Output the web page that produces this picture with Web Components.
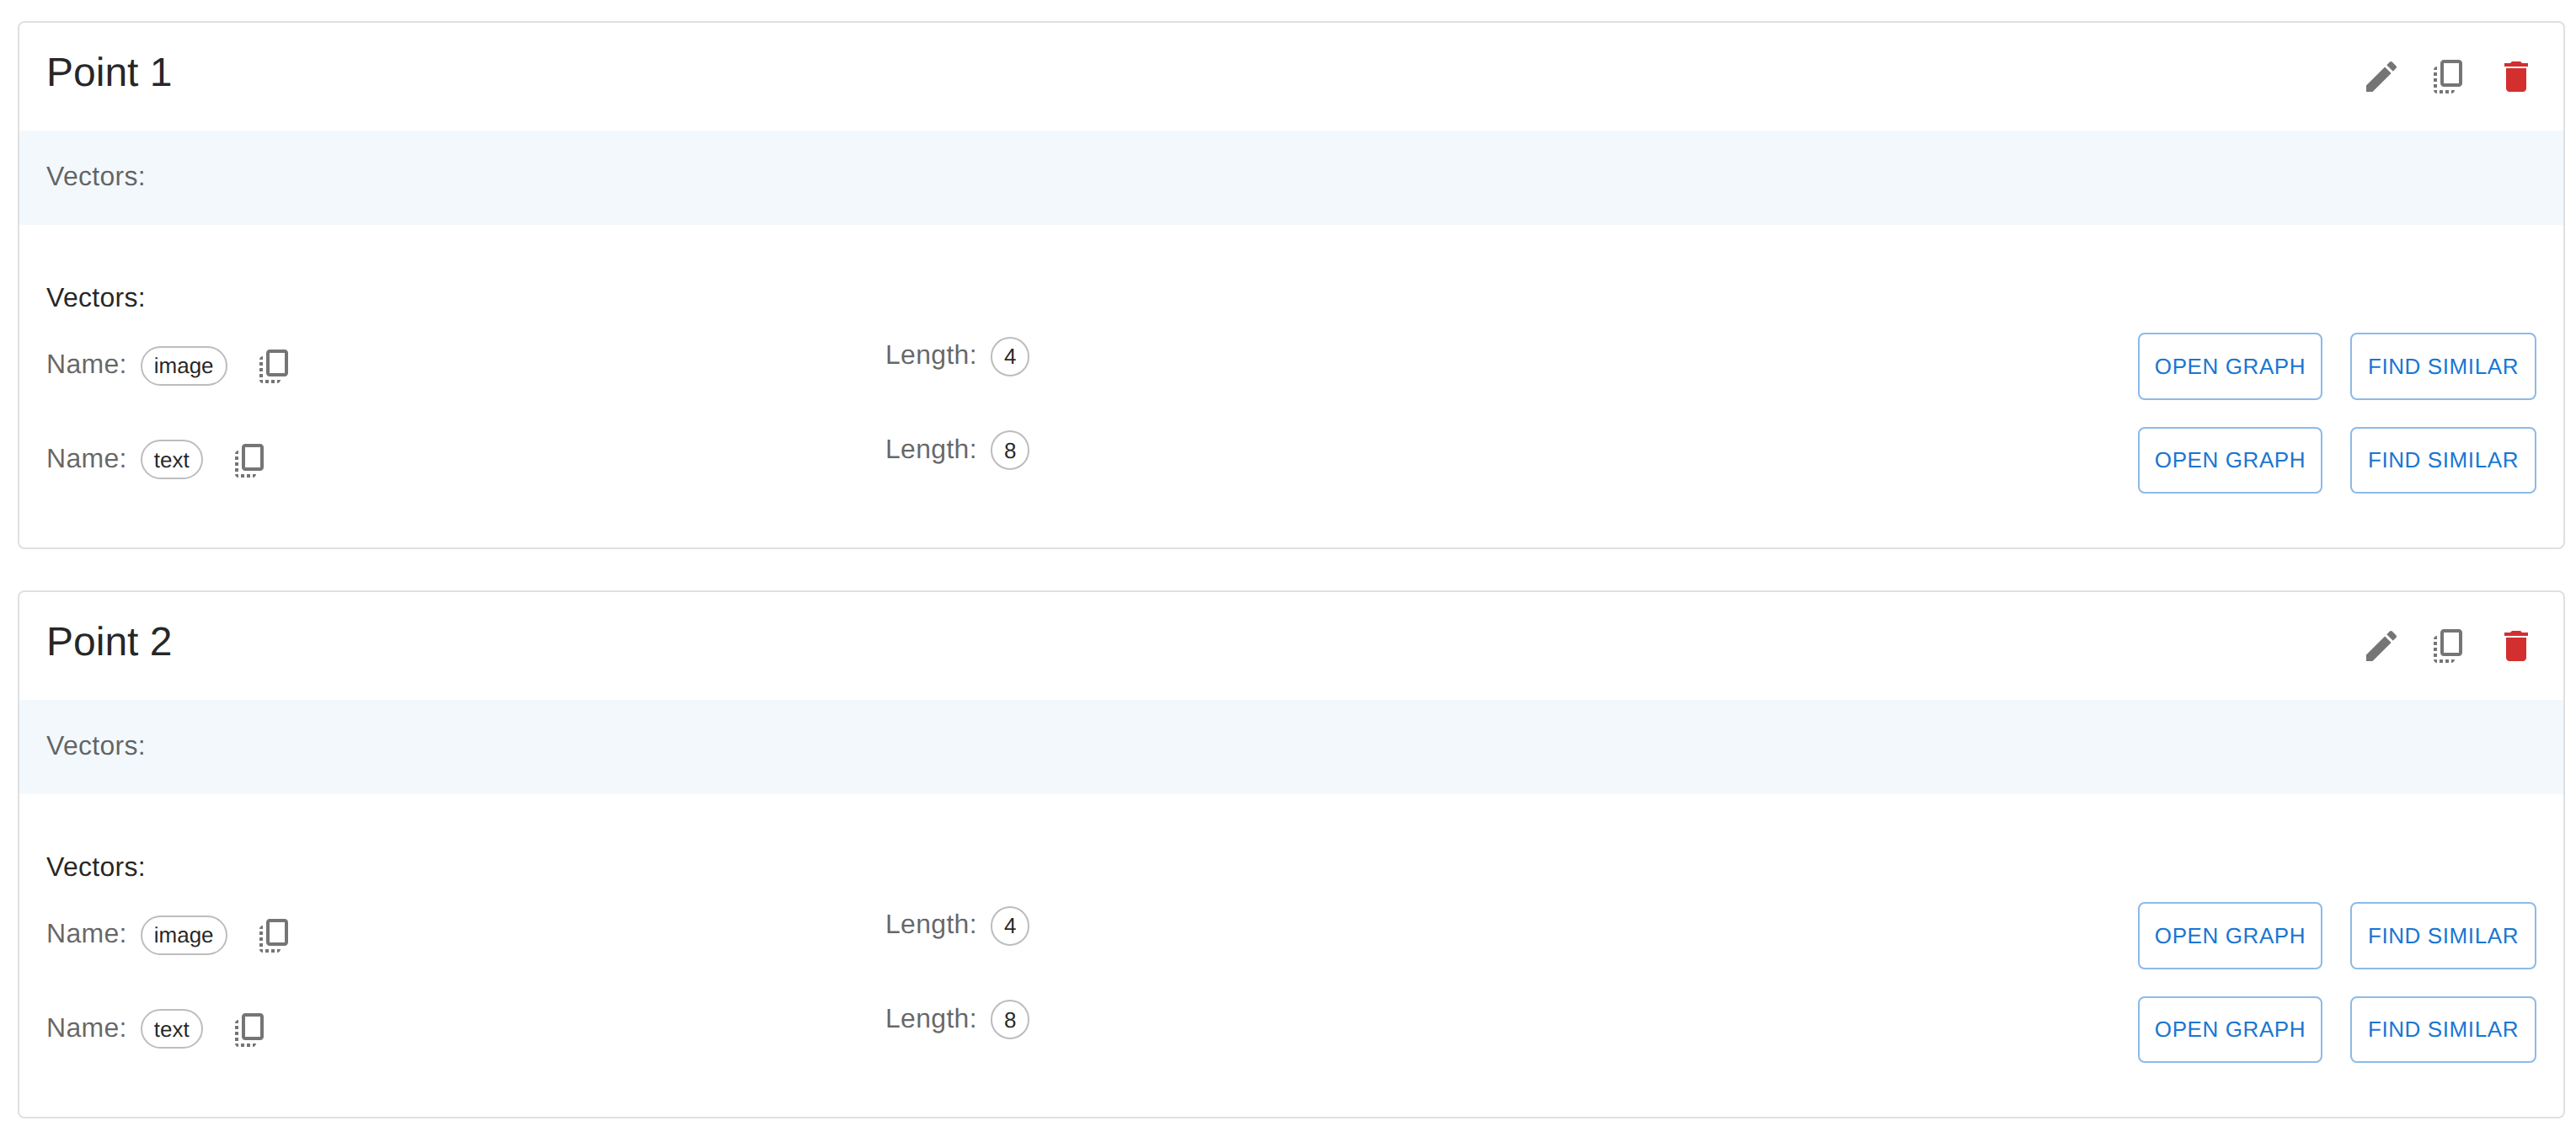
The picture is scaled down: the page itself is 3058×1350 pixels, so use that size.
<!DOCTYPE html>
<html>
<head>
<meta charset="utf-8">
<title>Points</title>
<style>
  html, body { margin: 0; background: #fff; }
  body { font-family: "Liberation Sans", Arial, sans-serif; text-rendering: geometricPrecision; }
</style>
</head>
<body>
<points-list>
  <point-card name="Point 1">
    <vector-row name="image" length="4"></vector-row>
    <vector-row name="text" length="8"></vector-row>
  </point-card>
  <point-card name="Point 2">
    <vector-row name="image" length="4"></vector-row>
    <vector-row name="text" length="8"></vector-row>
  </point-card>
</points-list>

<script>
const ICONS = {
  edit: 'M3 17.25V21h3.75L17.81 9.94l-3.75-3.75L3 17.25zM20.71 7.04c.39-.39.39-1.02 0-1.41l-2.34-2.34c-.39-.39-1.02-.39-1.41 0l-1.83 1.83 3.75 3.75 1.83-1.83z',
  copy: 'M18 2H9c-1.1 0-2 .9-2 2v12c0 1.1.9 2 2 2h9c1.1 0 2-.9 2-2V4c0-1.1-.9-2-2-2zm0 14H9V4h9v12zM3 15v-2h2v2H3zm0-5.5h2v2H3v-2zM10 20h2v2h-2v-2zm-7-1.5v-2h2v2H3zM5 22c-1.1 0-2-.9-2-2h2v2zm3.5 0h-2v-2h2v2zm5 0v-2h2c0 1.1-.9 2-2 2zM5 6v2H3c0-1.1.9-2 2-2z',
  delete: 'M6 19c0 1.1.9 2 2 2h8c1.1 0 2-.9 2-2V7H6v12zM19 4h-3.5l-1-1h-5l-1 1H5v2h14V4z'
}

class PointsList extends HTMLElement {
  constructor () {
    super()
    this.attachShadow({ mode: 'open' })
  }

  connectedCallback () {
    this.shadowRoot.innerHTML = /* html */`
      <style>
        :host {
          display: flex;
          flex-direction: column;
          gap: 49px;
          padding: 25px 13px 22px 21px;
          font-family: "Liberation Sans", Arial, sans-serif;
        }
      </style>
      <slot></slot>
    `
  }
}

class IconButton extends HTMLElement {
  constructor () {
    super()
    this.attachShadow({ mode: 'open' })
  }

  connectedCallback () {
    const icon = this.getAttribute('icon')
    this.shadowRoot.innerHTML = /* html */`
      <style>
        :host {
          display: block;
          width: 48px;
          height: 48px;
          color: #757575;
        }
        :host([danger]) {
          color: #d32f2f;
        }
        svg {
          display: block;
          width: 48px;
          height: 48px;
          fill: currentColor;
        }
      </style>
      <svg viewBox="0 0 24 24"><path d="${ICONS[icon]}"></path></svg>
    `
  }
}

class ValueChip extends HTMLElement {
  constructor () {
    super()
    this.attachShadow({ mode: 'open' })
  }

  connectedCallback () {
    this.shadowRoot.innerHTML = /* html */`
      <style>
        :host {
          display: inline-flex;
          align-items: center;
          box-sizing: border-box;
          height: 47px;
          padding: 0 14px;
          border: 2px solid #bdbdbd;
          border-radius: 24px;
          font-size: 26px;
          letter-spacing: 0;
          color: rgba(0, 0, 0, 0.87);
        }
      </style>
      <slot></slot>
    `
  }
}

class OutlineButton extends HTMLElement {
  constructor () {
    super()
    this.attachShadow({ mode: 'open' })
  }

  connectedCallback () {
    this.shadowRoot.innerHTML = /* html */`
      <style>
        :host {
          display: inline-flex;
          align-items: center;
          justify-content: center;
          box-sizing: border-box;
          width: var(--button-width);
          height: 79.5px;
          border: 2px solid rgba(25, 118, 210, 0.5);
          border-radius: 8px;
          font-size: 26px;
          letter-spacing: 0.6px;
          color: #1976d2;
          text-transform: uppercase;
        }
      </style>
      <slot></slot>
    `
  }
}

class VectorRow extends HTMLElement {
  constructor () {
    super()
    this.attachShadow({ mode: 'open' })
  }

  connectedCallback () {
    const name = this.getAttribute('name')
    const length = this.getAttribute('length')
    this.shadowRoot.innerHTML = /* html */`
      <style>
        :host {
          display: grid;
          grid-template-columns: 996px 1fr auto;
          height: 111.5px;
          font-size: 32px;
          line-height: 48px;
          letter-spacing: 0.3px;
          color: rgba(0, 0, 0, 0.6);
        }
        .name, .length {
          display: flex;
          align-items: baseline;
          gap: 16px;
          align-self: start;
        }
        .name { padding-top: 13px; }
        .length { padding-top: 2px; }
        .name icon-button {
          align-self: center;
          margin: 3px 0 0 16px;
        }
        .actions {
          display: flex;
          gap: 33px;
          align-items: flex-start;
          --button-width: 219px;
        }
        .actions outline-button:last-child {
          --button-width: 221px;
        }
      </style>
      <div class="name">
        <span>Name:</span>
        <value-chip>${name}</value-chip>
        <icon-button icon="copy"></icon-button>
      </div>
      <div class="length">
        <span>Length:</span>
        <value-chip>${length}</value-chip>
      </div>
      <div class="actions">
        <outline-button>Open graph</outline-button>
        <outline-button>Find similar</outline-button>
      </div>
    `
  }
}

class PointCard extends HTMLElement {
  constructor () {
    super()
    this.attachShadow({ mode: 'open' })
  }

  connectedCallback () {
    const name = this.getAttribute('name')
    this.shadowRoot.innerHTML = /* html */`
      <style>
        :host {
          display: block;
          box-sizing: border-box;
          height: 627px;
          border: 2px solid #e0e0e0;
          border-radius: 8px;
          background: #fff;
          color: rgba(0, 0, 0, 0.87);
        }
        .header {
          display: flex;
          align-items: center;
          justify-content: space-between;
          box-sizing: border-box;
          height: 128px;
          padding: 0 32px;
        }
        h2 {
          margin: 0 0 8px;
          font-size: 48px;
          line-height: 56px;
          font-weight: 400;
        }
        .tools {
          display: flex;
          gap: 32px;
        }
        .band {
          box-sizing: border-box;
          height: 112px;
          padding: 30px 32px;
          background: #f3f8fc;
          font-size: 32px;
          line-height: 48px;
          letter-spacing: 0.3px;
          color: rgba(0, 0, 0, 0.6);
        }
        .body {
          padding: 62px 32px 0;
        }
        .title {
          margin-bottom: 18px;
          font-size: 32px;
          line-height: 48px;
          letter-spacing: 0.3px;
        }
      </style>
      <div class="header">
        <h2>${name}</h2>
        <div class="tools">
          <icon-button icon="edit"></icon-button>
          <icon-button icon="copy"></icon-button>
          <icon-button icon="delete" danger></icon-button>
        </div>
      </div>
      <div class="band">Vectors:</div>
      <div class="body">
        <div class="title">Vectors:</div>
        <slot></slot>
      </div>
    `
  }
}

customElements.define('points-list', PointsList)
customElements.define('icon-button', IconButton)
customElements.define('value-chip', ValueChip)
customElements.define('outline-button', OutlineButton)
customElements.define('vector-row', VectorRow)
customElements.define('point-card', PointCard)
</script>
</body>
</html>
